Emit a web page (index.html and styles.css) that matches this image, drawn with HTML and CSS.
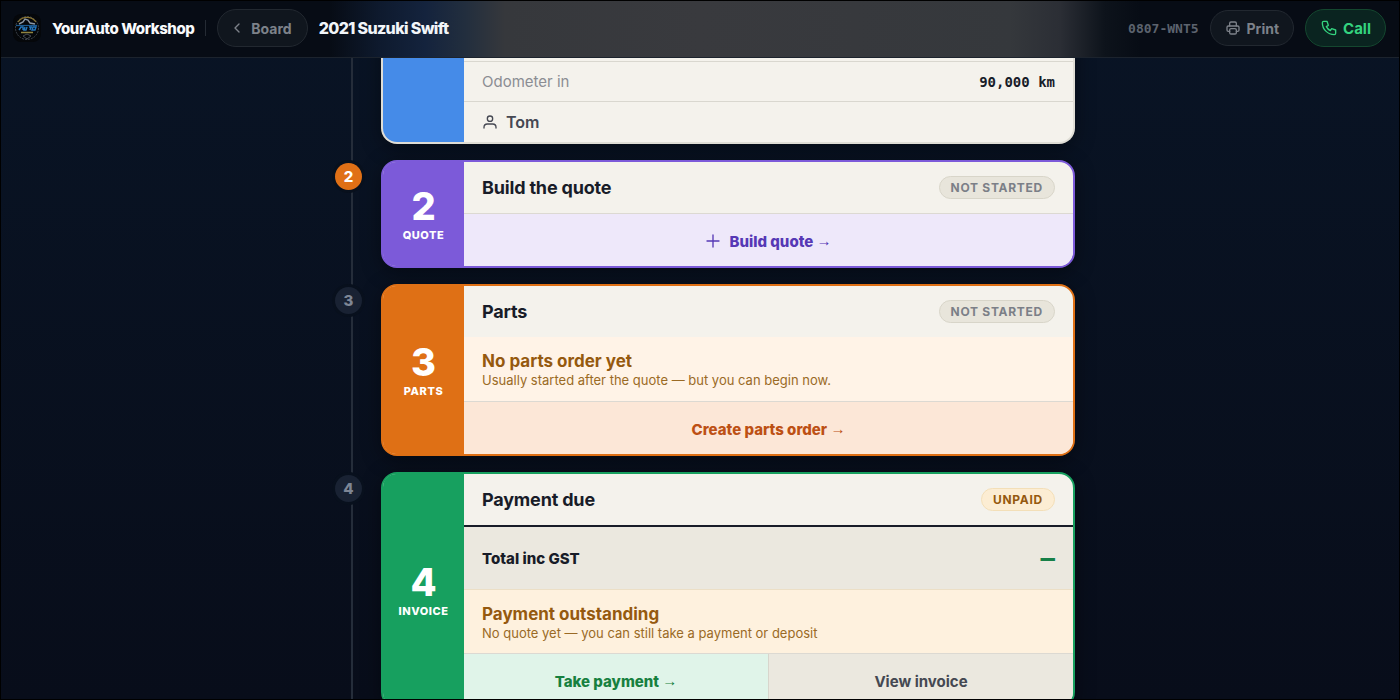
FILE: index.html
```html
<!DOCTYPE html>
<html lang="en">
<head>
  <meta charset="UTF-8">
  <meta name="viewport" content="width=device-width, initial-scale=1.0">
  <title>2021 Suzuki Swift - YourAuto Workshop</title>
  <link rel="stylesheet" href="styles.css">
</head>
<body>
  <div class="app">
    <header class="topbar">
      <svg class="logo" viewBox="0 0 28 28" aria-hidden="true">
        <rect width="28" height="28" rx="8" fill="#05070a"/>
        <circle cx="14" cy="14" r="11.5" fill="none" stroke="#3d454e" stroke-width="1" stroke-dasharray="2 1"/>
        <path d="M5 8a11 11 0 0 1 18 0" fill="none" stroke="#8a7430" stroke-width="1.2"/>
        <path d="M6 10l4-2 2-3 3 1 2 3 5 1" fill="none" stroke="#8b97a5" stroke-width="1.4"/>
        <path d="M3 11.500h21" fill="none" stroke="#1c5a90" stroke-width="1.200"/>
        <path d="M6 16l2-3h2v3m2-3l-1 3h2l1-3m2 0h3m-1 0l-1 3m3-3h3l-1 3h-3z" fill="none" stroke="#2577bd" stroke-width="1.400"/>
        <path d="M8 18.500h12" stroke="#8f8340" stroke-width="1.500"/>
        <path d="M10 22l4-2 4 2-4 3z" fill="none" stroke="#434a53" stroke-width="1"/>
      </svg>
      <span class="brand">YourAuto Workshop</span>
      <span class="divider"></span>
      <a class="pill pill-back" href="#board">
        <svg class="icon" viewBox="0 0 24 24"><path d="M15 6l-6 6 6 6"/></svg>
        Board
      </a>
      <h1 class="vehicle">2021 Suzuki Swift</h1>
      <div class="actions">
        <span class="job-ref">0807-WNT5</span>
        <button class="pill pill-print" type="button">
          <svg class="icon" viewBox="0 0 24 24"><path d="M17 17h2a2 2 0 0 0 2-2v-4a2 2 0 0 0-2-2H5a2 2 0 0 0-2 2v4a2 2 0 0 0 2 2h2"/><path d="M17 9V5a2 2 0 0 0-2-2H9a2 2 0 0 0-2 2v4"/><rect x="7" y="13" width="10" height="8" rx="2"/></svg>
          Print
        </button>
        <a class="pill pill-call" href="#call">
          <svg class="icon" viewBox="0 0 24 24"><path d="M4 2h5l2 6-3 2a13 13 0 0 0 6 6l2-3 6 2v5a2 2 0 0 1-2 2A18 18 0 0 1 2 4a2 2 0 0 1 2-2"/></svg>
          Call
        </a>
      </div>
    </header>

    <main class="timeline">
      <!-- Step 1 -->
      <section class="card card-vehicle">
        <div class="stripe"></div>
        <div class="content">
          <div class="spacer"></div>
          <div class="row">
            <span class="row-label">Odometer in</span>
            <span class="row-value">90,000 km</span>
          </div>
          <div class="row row-customer">
            <span class="customer">
              <svg class="icon" viewBox="0 0 24 24"><circle cx="12" cy="7" r="4"/><path d="M3 21v-1a5 5 0 0 1 5-5h8a5 5 0 0 1 5 5v1"/></svg>
              Tom
            </span>
          </div>
        </div>
      </section>

      <!-- Step 2 -->
      <section class="card card-quote">
        <span class="node node-active">2</span>
        <div class="stripe">
          <span class="step-number">2</span>
          <span class="step-name">QUOTE</span>
        </div>
        <div class="content">
          <div class="card-head">
            <h2>Build the quote</h2>
            <span class="badge">NOT STARTED</span>
          </div>
          <div class="buttons">
            <button class="action action-quote" type="button">
              <svg class="icon" viewBox="0 0 24 24"><path d="M12 3v18M3 12h18"/></svg>
              <span>Build quote <span class="arrow">→</span></span>
            </button>
          </div>
        </div>
      </section>

      <!-- Step 3 -->
      <section class="card card-parts">
        <span class="node">3</span>
        <div class="stripe">
          <span class="step-number">3</span>
          <span class="step-name">PARTS</span>
        </div>
        <div class="content">
          <div class="card-head">
            <h2>Parts</h2>
            <span class="badge">NOT STARTED</span>
          </div>
          <div class="notice">
            <strong>No parts order yet</strong>
            <p>Usually started after the quote — but you can begin now.</p>
          </div>
          <div class="buttons">
            <button class="action action-parts" type="button"><span>Create parts order <span class="arrow">→</span></span></button>
          </div>
        </div>
      </section>

      <!-- Step 4 -->
      <section class="card card-invoice">
        <span class="node">4</span>
        <div class="stripe">
          <span class="step-number">4</span>
          <span class="step-name">INVOICE</span>
        </div>
        <div class="content">
          <div class="card-head">
            <h2>Payment due</h2>
            <span class="badge badge-unpaid">UNPAID</span>
          </div>
          <div class="total">
            <span>Total inc GST</span>
            <span class="total-value">—</span>
          </div>
          <div class="notice notice-payment">
            <strong>Payment outstanding</strong>
            <p>No quote yet — you can still take a payment or deposit</p>
          </div>
          <div class="buttons">
            <button class="action action-pay" type="button"><span>Take payment <span class="arrow">→</span></span></button>
            <button class="action action-view" type="button">View invoice</button>
          </div>
        </div>
      </section>
    </main>
  </div>
</body>
</html>
```
FILE: styles.css
```css
* {
  box-sizing: border-box;
}

body {
  margin: 0;
  font-family: Inter, "Liberation Sans", sans-serif;
  background: #000;
}

h1, h2, p {
  margin: 0;
}

button {
  font-family: inherit;
  cursor: pointer;
}

a {
  text-decoration: none;
}

.icon {
  width: 16px;
  height: 16px;
  fill: none;
  stroke: currentColor;
  stroke-width: 2;
  stroke-linecap: round;
  stroke-linejoin: round;
}

/* Scrolling shell */
.app {
  height: 100vh;
  overflow-y: auto;
  scrollbar-width: none;
  border: 1px solid #000;
  background: linear-gradient(#091425, #080d1a);
}

/* Top bar, with the glow of the card passing under it */
.topbar {
  position: sticky;
  top: 0;
  z-index: 10;
  display: flex;
  align-items: center;
  gap: 11px;
  height: 57px;
  padding: 0 13px 2px 12px;
  border-bottom: 1px solid #1c232d;
  background: linear-gradient(
    90deg,
    #070c15 calc(50% - 370px),
    #0e1a2e calc(50% - 320px),
    #14233d calc(50% - 275px),
    #222e3e calc(50% - 235px),
    #36383c calc(50% - 195px),
    #393a3e 50%,
    #35383c calc(50% + 310px),
    #2b2e35 calc(50% + 360px),
    #0d131b calc(50% + 405px),
    #070c15 calc(50% + 440px)
  );
}

.logo {
  width: 28px;
  height: 28px;
}

.brand {
  font-size: 15px;
  font-weight: 800;
  letter-spacing: -0.03em;
  color: #f8fafc;
}

.divider {
  width: 1px;
  height: 16px;
  background: #252b34;
}

.vehicle {
  font-size: 16px;
  font-weight: 800;
  letter-spacing: -0.04em;
  color: #f1f5f9;
}

.actions {
  display: flex;
  align-items: center;
  gap: 11px;
  margin-left: auto;
}

.job-ref {
  font-family: "DejaVu Sans Mono", monospace;
  font-size: 13px;
  font-weight: 700;
  color: #5c636e;
}

.pill {
  display: flex;
  align-items: center;
  gap: 6px;
  height: 38px;
  padding: 0 15px;
  border: 1px solid #222830;
  border-radius: 20px;
  font-size: 14px;
  font-weight: 700;
  color: #7d828a;
  background: #10161e;
}

.pill-back {
  padding-left: 11px;
}

.pill-print {
  height: 36px;
  padding: 0 14px;
}

.pill-call {
  padding: 0 14px 0 15px;
  border-color: #14472f;
  font-size: 15px;
  color: #34d37f;
  background: #0a2420;
}

/* Timeline */
.timeline {
  position: relative;
  display: flex;
  flex-direction: column;
  gap: 16px;
  max-width: 750px;
  margin: -57px auto 0;
  padding: 0 0 40px 56px;
}

.timeline::before {
  content: "";
  position: absolute;
  top: 0;
  bottom: 0;
  left: 26px;
  width: 2px;
  background: #252d3a;
}

.node {
  position: absolute;
  top: 1px;
  left: -48px;
  display: flex;
  align-items: center;
  justify-content: center;
  width: 27px;
  height: 27px;
  border-radius: 50%;
  font-size: 15px;
  font-weight: 800;
  color: #7e8695;
  background: #192233;
  box-shadow: 0 0 0 3px #08101d;
}

.node-active {
  color: #fff;
  background: #e07016;
}

/* Cards */
.card {
  position: relative;
  display: flex;
  border: 2px solid;
  border-radius: 16px;
  background: #f4f2ec;
  box-shadow: 0 4px 20px rgba(0, 0, 0, 0.4);
}

.card-vehicle {
  border-color: #e0ded6;
  border-top: 0;
  border-radius: 0 0 16px 16px;
}

.card-vehicle .stripe {
  border-radius: 0 0 0 14px;
  background: #458be8;
}

.card-quote {
  border-color: #7c5ad9;
}

.card-quote .stripe {
  background: #7c5ad9;
}

.card-parts {
  border-color: #df7015;
}

.card-parts .stripe {
  background: #df7015;
}

.card-invoice {
  border-color: #17a05f;
}

.card-invoice .stripe {
  background: #17a05f;
}

.stripe {
  display: flex;
  flex-direction: column;
  align-items: center;
  justify-content: center;
  gap: 2px;
  flex: 0 0 81px;
  border-radius: 13px 0 0 13px;
  color: #fff;
}

.step-number {
  font-size: 38px;
  font-weight: 800;
  line-height: 40px;
}

.step-name {
  font-size: 11px;
  font-weight: 800;
  line-height: 14px;
  letter-spacing: 0.05em;
}

.content {
  flex: 1;
  overflow: hidden;
  border-radius: 0 14px 14px 0;
}

.card-head {
  display: flex;
  align-items: center;
  justify-content: space-between;
  height: 51px;
  padding: 0 18px;
}

.card-head h2 {
  font-size: 18px;
  font-weight: 700;
  letter-spacing: -0.01em;
  color: #181c28;
}

.badge {
  padding: 0 11px;
  border: 1px solid #d8d5c9;
  border-radius: 12px;
  font-size: 12px;
  font-weight: 700;
  line-height: 21px;
  letter-spacing: 0.06em;
  color: #7b7f87;
  background: #e8e5db;
}

.badge-unpaid {
  border-color: #f3dfb8;
  color: #95590f;
  background: #fcedd3;
}

/* Detail rows */
.spacer {
  height: 60px;
}

.row {
  display: flex;
  align-items: center;
  justify-content: space-between;
  height: 40px;
  padding: 0 18px;
  border-top: 1px solid #d9d7cf;
  font-size: 15px;
}

.row-customer {
  height: 41px;
}

.row-label {
  color: #8b8d93;
}

.row-value {
  font-family: "DejaVu Sans Mono", monospace;
  font-size: 14px;
  font-weight: 700;
  color: #181c28;
}

.customer {
  display: flex;
  align-items: center;
  gap: 8px;
  font-size: 16px;
  font-weight: 600;
  color: #454852;
}

.notice {
  height: 64px;
  padding: 14px 18px 0;
  color: #95590f;
  background: #fff3e7;
}

.notice strong {
  display: block;
  font-size: 17px;
  font-weight: 700;
  line-height: 20px;
}

.notice p {
  font-size: 13px;
  line-height: 18px;
  color: #9a6a25;
}

.notice-payment {
  border-top: 1px solid #ecdfc6;
  background: #fef1de;
}

.total {
  display: flex;
  align-items: center;
  justify-content: space-between;
  height: 64px;
  padding: 0 18px;
  border-top: 2px solid #181c28;
  font-size: 15px;
  font-weight: 800;
  color: #181c28;
  background: #ebe8df;
}

.total-value {
  font-family: "DejaVu Sans Mono", monospace;
  font-size: 24px;
  color: #178048;
}

/* Footer buttons */
.buttons {
  display: flex;
  border-top: 1px solid #dcd9d2;
}

.action {
  display: flex;
  flex: 1;
  align-items: center;
  justify-content: center;
  gap: 8px;
  height: 52px;
  padding: 2px 0 0;
  border: 0;
  font-size: 15px;
  font-weight: 800;
}

.arrow {
  font-family: "Liberation Sans", sans-serif;
  font-weight: 400;
  vertical-align: 1px;
}

.action-quote {
  color: #5638b5;
  background: #eee8fa;
}

.action-parts {
  color: #bd5014;
  background: #fce7d7;
}

.action-pay {
  color: #17803f;
  background: #e0f4e9;
}

.action-view {
  border-left: 1px solid #d8d5cc;
  font-weight: 700;
  color: #454852;
  background: #ebe8df;
}
```
